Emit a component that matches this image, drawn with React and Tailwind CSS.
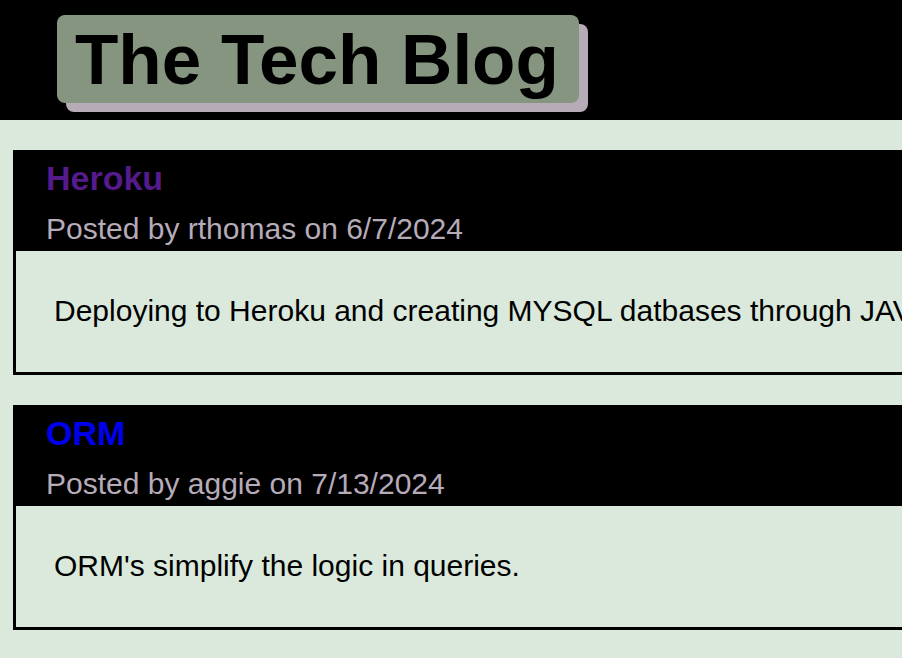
import React from 'react';

const posts = [
  {
    title: 'Heroku',
    visited: true,
    author: 'rthomas',
    date: '6/7/2024',
    body: 'Deploying to Heroku and creating MYSQL datbases through JAVASCRIPT and sequelize.',
  },
  {
    title: 'ORM',
    visited: false,
    author: 'aggie',
    date: '7/13/2024',
    body: "ORM's simplify the logic in queries.",
  },
];

const PostCard = ({ post }) => (
  <article className="border-[3px] border-black">
    <header className="bg-black pl-[30px] pt-[6px] pb-[5px]">
      <h2
        className={`text-[34px] font-bold leading-[normal] ${
          post.visited ? 'text-[#551a8b]' : 'text-[#0000ee]'
        }`}
      >
        {post.title}
      </h2>
      <p className="mt-[14px] text-[30px] leading-[normal] text-[#b6abb9]">
        Posted by {post.author} on {post.date}
      </p>
    </header>
    <div className="pl-[38px] pt-[43px] pb-[44px]">
      <p className="whitespace-nowrap text-[30px] leading-[normal] text-black">{post.body}</p>
    </div>
  </article>
);

export default function App() {
  return (
    <div className="min-h-screen w-full overflow-hidden bg-[#dae9db] font-['Liberation_Sans',Arial,sans-serif]">
      <header className="h-[120px] bg-black pl-[57px] pt-[15px]">
        <h1 className="inline-block rounded-[8px] bg-[#85957f] pl-[18px] pr-[20px] pt-[4px] pb-[3px] text-[71px] font-bold leading-[normal] text-black shadow-[9px_9px_0_#b6abb6]">
          The Tech Blog
        </h1>
      </header>
      <main className="flex w-[1200px] flex-col gap-[30px] px-[13px] pt-[30px] pb-[30px]">
        {posts.map((post) => (
          <PostCard key={post.title} post={post} />
        ))}
      </main>
    </div>
  );
}
